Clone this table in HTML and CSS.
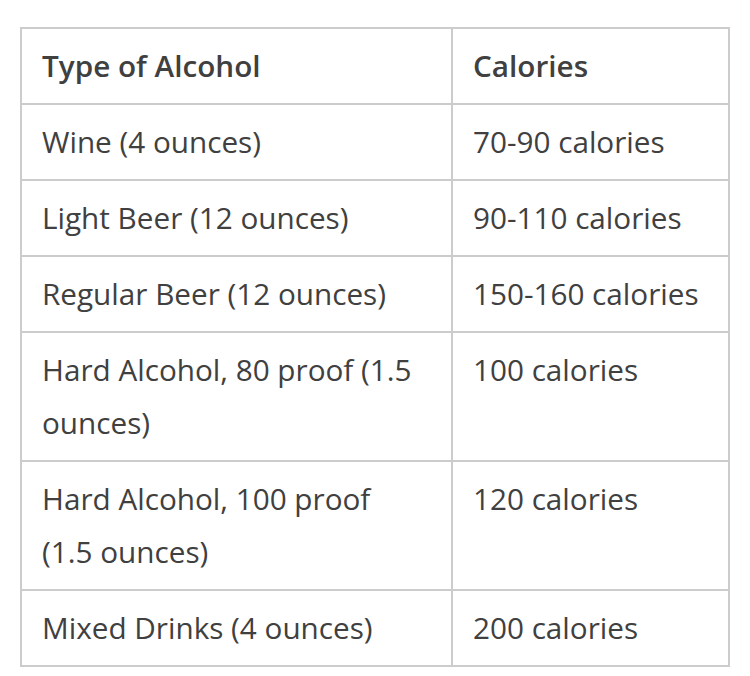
FILE: index.html
```html
<!DOCTYPE html>
<html>
<head>
<meta charset="utf-8">
<link rel="stylesheet" href="styles.css">
</head>
<body>
<table class="cal-table">
  <thead>
    <tr><th class="col-type">Type of Alcohol</th><th class="col-cal">Calories</th></tr>
  </thead>
  <tbody>
    <tr><td>Wine (4 ounces)</td><td>70-90 calories</td></tr>
    <tr><td>Light Beer (12 ounces)</td><td>90-110 calories</td></tr>
    <tr><td>Regular Beer (12 ounces)</td><td>150-160 calories</td></tr>
    <tr><td>Hard Alcohol, 80 proof (1.5 ounces)</td><td>100 calories</td></tr>
    <tr><td>Hard Alcohol, 100 proof (1.5 ounces)</td><td>120 calories</td></tr>
    <tr><td>Mixed Drinks (4 ounces)</td><td>200 calories</td></tr>
  </tbody>
</table>
</body>
</html>
```
FILE: styles.css
```css
html, body {
  margin: 0;
  padding: 0;
  background: #ffffff;
}
body {
  padding: 27px 20px 0 20px;
  font-family: "Open Sans", "Noto Sans", sans-serif;
  color: #404040;
}
.cal-table {
  width: 710px;
  border-collapse: collapse;
  table-layout: fixed;
  font-size: 29.7px;
  line-height: 53px;
}
.col-type { width: 385px; }
.cal-table th,
.cal-table td {
  border: 2px solid #cccccc;
  padding: 10px 24px 11px 20px;
  text-align: left;
  vertical-align: top;
}
.cal-table th {
  font-weight: 600;
}
.cal-table td {
  font-weight: 400;
}
```
